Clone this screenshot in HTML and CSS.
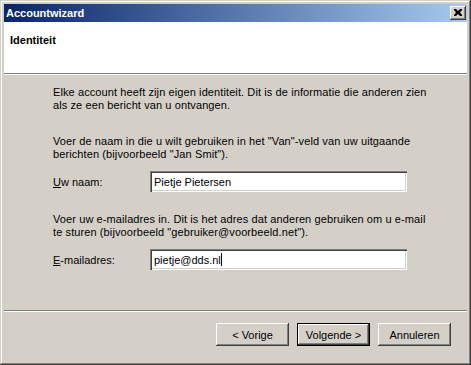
FILE: index.html
```html
<!DOCTYPE html>
<html lang="nl">
<head>
    <meta charset="UTF-8">
    <meta name="viewport" content="width=device-width, initial-scale=1.0">
    <title>Accountwizard</title>
    <link rel="stylesheet" href="styles.css">
</head>
<body>
    <div class="window">
        <div class="titlebar">
            <span class="title">Accountwizard</span>
            <span class="close-btn">
                <svg width="8" height="7" viewBox="0 0 8 7">
                    <path d="M0 0h2l2 2 2-2h2v1L6 3.5 8 6v1H6L4 5 2 7H0V6l2-2.5L0 1z" fill="#000"/>
                </svg>
            </span>
        </div>

        <div class="header">
            <h1>Identiteit</h1>
        </div>

        <div class="content">
            <p class="intro">Elke account heeft zijn eigen identiteit. Dit is de informatie die anderen zien<br>als ze een bericht van u ontvangen.</p>

            <p class="hint">Voer de naam in die u wilt gebruiken in het "Van"-veld van uw uitgaande<br>berichten (bijvoorbeeld "Jan Smit").</p>
            <div class="field">
                <label for="naam"><u>U</u>w naam:</label>
                <div class="textbox" id="naam">Pietje Pietersen</div>
            </div>

            <p class="hint">Voer uw e-mailadres in. Dit is het adres dat anderen gebruiken om u e-mail<br>te sturen (bijvoorbeeld "gebruiker@voorbeeld.net").</p>
            <div class="field">
                <label for="email"><u>E</u>-mailadres:</label>
                <div class="textbox" id="email">pietje@dds.nl<span class="caret"></span></div>
            </div>
        </div>

        <div class="footer">
            <button type="button" class="btn">&lt; Vorige</button>
            <button type="button" class="btn btn-default">Volgende &gt;</button>
            <button type="button" class="btn">Annuleren</button>
        </div>
    </div>
</body>
</html>
```

FILE: styles.css
```css
body {
    margin: 0;
    font-family: "Liberation Sans", Arial, sans-serif;
    font-size: 11px;
    color: #000;
    background-color: #d4d0c8;
}

.window {
    width: 471px;
    height: 365px;
    box-sizing: border-box;
    padding: 4px;
    background-color: #d4d0c8;
    box-shadow: inset -1px -1px #404040, inset 1px 1px #d4d0c8,
                inset -2px -2px #808080, inset 2px 2px #fff;
    display: flex;
    flex-direction: column;
}

.titlebar {
    height: 18px;
    background: linear-gradient(to right, #0a246a, #a6caf0);
    display: flex;
    align-items: center;
    justify-content: space-between;
    padding: 0 1px 0 2px;
}

.title {
    color: #fff;
    font-weight: bold;
    font-size: 11px;
}

.close-btn {
    width: 16px;
    height: 14px;
    box-sizing: border-box;
    background-color: #d4d0c8;
    box-shadow: inset -1px -1px #404040, inset 1px 1px #fff,
                inset -2px -2px #808080;
    display: flex;
    align-items: center;
    justify-content: center;
    padding: 0 1px 1px 0;
}

.header {
    height: 52px;
    background-color: #fff;
    border-bottom: 1px solid #808080;
    box-shadow: 0 1px 0 #fff;
    padding: 12px 0 0 6px;
    box-sizing: border-box;
}

.header h1 {
    margin: 0;
    font-size: 11px;
    font-weight: bold;
    line-height: 13px;
}

.content {
    margin-top: 1px;
    height: 236px;
    padding: 11px 20px 0 49px;
    box-sizing: border-box;
    border-bottom: 1px solid #808080;
    box-shadow: 0 1px 0 #fff;
}

.content p {
    margin: 0;
    line-height: 13px;
    letter-spacing: 0.1px;
}

.intro {
    margin-bottom: 23px !important;
}

.hint {
    margin-bottom: 10px !important;
}

.field {
    display: flex;
    align-items: center;
    margin-bottom: 21px;
}

.field label {
    width: 97px;
}

.textbox {
    width: 257px;
    height: 21px;
    box-sizing: border-box;
    background-color: #fff;
    box-shadow: inset 1px 1px #808080, inset 2px 2px #404040,
                inset -1px -1px #fff, inset -2px -2px #d4d0c8;
    padding: 0 4px;
    display: flex;
    align-items: center;
}

.caret {
    display: inline-block;
    width: 1px;
    height: 13px;
    background-color: #000;
}

.footer {
    margin-top: 1px;
    flex: 1;
    display: flex;
    justify-content: flex-end;
    align-items: flex-start;
    gap: 8px;
    padding: 11px 16px 0 0;
}

.btn {
    width: 73px;
    height: 23px;
    border: none;
    padding: 0;
    font-family: "Liberation Sans", Arial, sans-serif;
    font-size: 11px;
    color: #000;
    background-color: #d4d0c8;
    box-shadow: inset -1px -1px #404040, inset 1px 1px #fff,
                inset -2px -2px #808080;
}

.btn-default {
    box-shadow: inset 0 0 0 1px #000, inset -2px -2px #404040,
                inset 2px 2px #fff, inset -3px -3px #808080;
}
```
